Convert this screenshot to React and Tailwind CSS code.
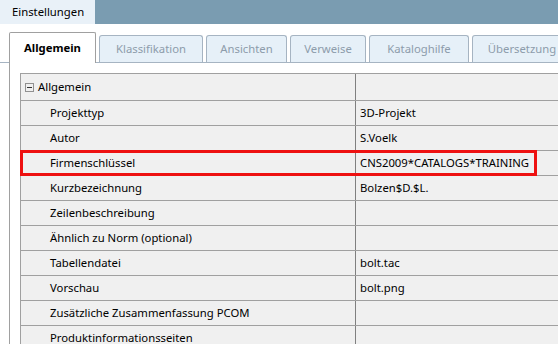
import React from 'react';

const tabs = [
  { label: 'Allgemein', w: 'w-[87px]', active: true },
  { label: 'Klassifikation', w: 'w-[104px]' },
  { label: 'Ansichten', w: 'w-[81px]' },
  { label: 'Verweise', w: 'w-[76px]' },
  { label: 'Kataloghilfe', w: 'w-[100px]' },
  { label: 'Übersetzung', w: 'w-[100px]' },
];

const rows = [
  ['Projekttyp', '3D-Projekt'],
  ['Autor', 'S.Voelk'],
  ['Firmenschlüssel', 'CNS2009*CATALOGS*TRAINING', true],
  ['Kurzbezeichnung', 'Bolzen$D.$L.'],
  ['Zeilenbeschreibung', ''],
  ['Ähnlich zu Norm (optional)', ''],
  ['Tabellendatei', 'bolt.tac'],
  ['Vorschau', 'bolt.png'],
  ['Zusätzliche Zusammenfassung PCOM', ''],
  ['Produktinformationsseiten', ''],
];

const App = () => {
  return (
    <div className="w-[558px] h-[344px] overflow-hidden bg-white text-[11.3px] text-black font-['Noto_Sans',sans-serif]">
      {/* window tab bar */}
      <div className="h-[24px] flex bg-[#7a9cb1]">
        <div className="w-[95px] bg-[#e9f1f8] pl-[12px] leading-[24px]">Einstellungen</div>
      </div>

      {/* tab strip */}
      <div className="h-[39px] pl-[9px] flex items-end gap-[3px] border-b border-[#a6b4c2]">
        {tabs.map((t) =>
          t.active ? (
            <div
              key={t.label}
              className={`${t.w} h-[31px] -mb-px shrink-0 bg-white border border-b-0 border-[#a0a0a0] rounded-t-[2px] flex items-center justify-center font-bold`}
            >
              {t.label}
            </div>
          ) : (
            <div
              key={t.label}
              className={`${t.w} h-[27px] shrink-0 bg-[#e6f0f8] border border-b-0 border-[#a6b4c2] rounded-t-[3px] flex items-center justify-center text-[#8d9cab]`}
            >
              {t.label}
            </div>
          )
        )}
      </div>

      {/* panel */}
      <div className="ml-[9px] h-full border-l border-[#a0a0a0] pt-[10px] pl-[10px]">
        <div className="border-t border-l border-[#a0a0a0] bg-[#f0f0f0]">
          <div className="h-[27px] flex border-b border-[#a0a0a0]">
            <div className="w-[334px] flex items-center pl-[4px] gap-[4px]">
              <div className="w-[9px] h-[9px] border border-[#919191] flex items-center justify-center">
                <div className="w-[5px] h-px bg-[#333]"></div>
              </div>
              <span>Allgemein</span>
            </div>
            <div className="w-px bg-[#808080]"></div>
          </div>
          {rows.map(([label, value, marked]) => (
            <div key={label} className="relative h-[25px] flex border-b border-[#a0a0a0]">
              <div className="w-[334px] pl-[29px] flex items-center">{label}</div>
              <div className="w-px bg-[#808080]"></div>
              <div className="pl-[4px] flex items-center">{value}</div>
              {marked && (
                <div className="absolute -left-px -top-px w-[517px] h-[26px] border-[3px] border-[#ee1111]"></div>
              )}
            </div>
          ))}
        </div>
      </div>
    </div>
  );
};

export default App;
